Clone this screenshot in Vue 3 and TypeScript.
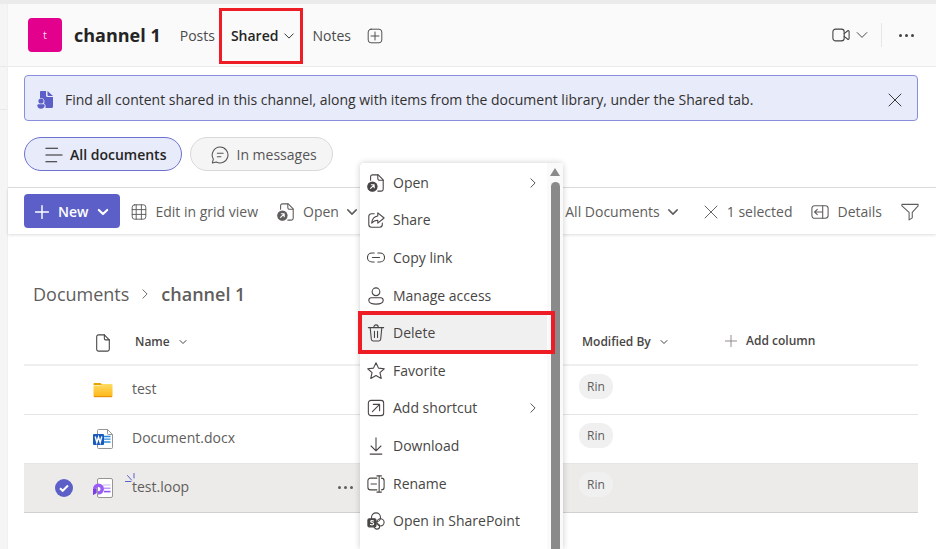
<script setup lang="ts">
import { h, ref } from 'vue'

const glyphs = {
  chevronDown: ['M4 7l6 6 6-6'],
  chevronRight: ['M7 4l6 6-6 6'],
  close: ['M2.500 2.500l15 15M17.500 2.500l-15 15'],
  plus: ['M10 2v16M2 10h16'],
  addBox: ['M5 1.500h10a3.500 3.500 0 0 1 3.500 3.500v10a3.500 3.500 0 0 1-3.500 3.500H5A3.500 3.500 0 0 1 1.500 15V5A3.500 3.500 0 0 1 5 1.500z', 'M10 5v10M5 10h10'],
  video: ['M4 3.500h6.500a3 3 0 0 1 3 3v7a3 3 0 0 1-3 3H4a3 3 0 0 1-3-3v-7a3 3 0 0 1 3-3z', 'M13.500 8.500l4-3.200c.6-.4 1.500-.1 1.500.7v8c0 .8-.9 1.100-1.500.7l-4-3.200'],
  lines: ['M1 2.500h13M1 10h18M1 17.500h12'],
  chat: ['M10 1.200a8.800 8.800 0 1 1-4.200 16.500L1.500 18.800l1.100-4.300A8.800 8.800 0 0 1 10 1.200z', 'M7 8h6.500M7 12h4'],
  grid: ['M4.500 1h11a3 3 0 0 1 3 3v12a3 3 0 0 1-3 3h-11a3 3 0 0 1-3-3V4a3 3 0 0 1 3-3z', 'M6.500 1v18M13 1v18M1.500 7h17M1.500 13h17'],
  share: ['M8 3H5a3 3 0 0 0-3 3v9a3 3 0 0 0 3 3h9a3 3 0 0 0 3-3v-1.500', 'M12 2l7 5.800-7 5.700v-3.300c-3 0-5 1-6.800 3.300C5.600 9 8 6 12 5.500z'],
  link: ['M8 4.500H5.500a5 5 0 0 0 0 10H8M12 4.500h2.500a5 5 0 0 1 0 10H12M6 9.500h8'],
  person: ['M10 1a4.300 4.300 0 1 1 0 8.600A4.300 4.300 0 0 1 10 1z', 'M5 12h10a3 3 0 0 1 3 3c0 2.600-3.600 4-8 4s-8-1.400-8-4a3 3 0 0 1 3-3z'],
  trash: ['M1.500 4h17M7.500 4c0-4 5-4 5 0M3.500 4l1.300 13a2 2 0 0 0 2 1.800h6.400a2 2 0 0 0 2-1.800l1.300-13', 'M8.300 8v7M11.700 8v7'],
  star: ['M10 .8l2.800 6 6.400.7-4.800 4.400 1.400 6.400L10 15.100l-5.800 3.200 1.400-6.400L.8 7.500l6.400-.7z'],
  shortcut: ['M4.500 1.500h11a3 3 0 0 1 3 3v11a3 3 0 0 1-3 3h-11a3 3 0 0 1-3-3v-11a3 3 0 0 1 3-3z', 'M7 6h7v7M14 6l-8 8'],
  download: ['M10 1v14M4.500 10l5.500 5.500 5.500-5.500M3.500 19h13'],
  rename: ['M11 3.500H4a3 3 0 0 0-3 3v7a3 3 0 0 0 3 3h7M16 3.500a3 3 0 0 1 3 3v7a3 3 0 0 1-3 3', 'M13.500 1v18M11 1h5M11 19h5', 'M4.500 10h6'],
  details: ['M4 3h12a3 3 0 0 1 3 3v8a3 3 0 0 1-3 3H4a3 3 0 0 1-3-3V6a3 3 0 0 1 3-3z', 'M13 3v14M4 10h9M7 7l-3 3 3 3'],
  filter: ['M1 1.500h18v1.700l-6.500 7.300v6L9 18.800v-8.300L1 3.200z'],
  file: ['M5 1h6.500L17 6.500V17a2 2 0 0 1-2 2H5a2 2 0 0 1-2-2V3a2 2 0 0 1 2-2z', 'M11.500 1v4a1.500 1.500 0 0 0 1.500 1.500h4'],
  sparks: ['M5 5l8 9M18 1v9M1 17h11'],
}
type GlyphName = keyof typeof glyphs

const Glyph = (props: { name: GlyphName }) =>
  h('svg', { viewBox: '0 0 20 20', class: 'glyph', 'aria-hidden': 'true' },
    glyphs[props.name].map((d) => h('path', { d })))
Glyph.props = ['name']

const OpenFile = () =>
  h('svg', { viewBox: '0 0 20 20', class: 'glyph', 'aria-hidden': 'true' }, [
    h('path', { d: 'M4 7V3a2 2 0 0 1 2-2h6.500L18 6.500V17a2 2 0 0 1-2 2h-4' }),
    h('path', { d: 'M12 1v4a2 2 0 0 0 2 2h4' }),
    h('circle', { cx: 6, cy: 14, r: 5.2, fill: 'currentColor' }),
    h('path', { d: 'M4 16l4-4M4.800 12H8v3.200', stroke: '#fff' }),
  ])

const SharePointMark = () =>
  h('svg', { viewBox: '0 0 20 20', class: 'glyph', 'aria-hidden': 'true' }, [
    h('circle', { cx: 10, cy: 6, r: 5 }),
    h('circle', { cx: 15, cy: 11.5, r: 4 }),
    h('circle', { cx: 11, cy: 16, r: 3 }),
    h('rect', { x: 1, y: 7.5, width: 9, height: 9, rx: 1.5, fill: 'currentColor' }),
    h('path', { d: 'M7.300 10c-1.500-.8-3.300-.5-3.200.6.100 1.500 3.300.8 3.300 2.500 0 1.300-2 1.500-3.600.7', stroke: '#fff' }),
  ])

interface MenuItem { label: string; icon: GlyphName | 'open' | 'sharepoint'; submenu?: boolean; active?: boolean }
const menu: MenuItem[] = [
  { label: 'Open', icon: 'open', submenu: true },
  { label: 'Share', icon: 'share' },
  { label: 'Copy link', icon: 'link' },
  { label: 'Manage access', icon: 'person' },
  { label: 'Delete', icon: 'trash', active: true },
  { label: 'Favorite', icon: 'star' },
  { label: 'Add shortcut', icon: 'shortcut', submenu: true },
  { label: 'Download', icon: 'download' },
  { label: 'Rename', icon: 'rename' },
  { label: 'Open in SharePoint', icon: 'sharepoint' },
]

interface FileRow { name: string; kind: 'folder' | 'word' | 'loop'; by: string }
const files: FileRow[] = [
  { name: 'test', kind: 'folder', by: 'Rin' },
  { name: 'Document.docx', kind: 'word', by: 'Rin' },
  { name: 'test.loop', kind: 'loop', by: 'Rin' },
]
const selected = ref<string[]>(['test.loop'])
</script>

<template>
  <div class="window">
    <div class="rail"></div>
    <div class="content">
      <header class="channel">
        <span class="avatar">t</span>
        <h1>channel 1</h1>
        <nav class="tabs">
          <a href="#posts">Posts</a>
          <a href="#shared" class="current" aria-current="page">Shared <Glyph name="chevronDown" class="small" /></a>
          <a href="#notes">Notes</a>
          <button type="button" aria-label="Add a tab"><Glyph name="addBox" /></button>
        </nav>
        <div class="actions">
          <button type="button" aria-label="Meet"><Glyph name="video" class="large" /><Glyph name="chevronDown" /></button>
          <span class="divider"></span>
          <button type="button" aria-label="More options" class="dots"><i></i><i></i><i></i></button>
        </div>
      </header>

      <section class="banner">
        <svg class="banner-icon" viewBox="0 0 16 18" aria-hidden="true">
          <path d="M4 0h5v4.500A1.500 1.500 0 0 0 10.500 6H16v9.500a1.500 1.500 0 0 1-1.500 1.500H8.500c.4-2.500 0-3.500-1.500-4.500C8.500 9 6.500 7 3 7V1a1 1 0 0 1 1-1z" />
          <path d="M10.500 0L16 5h-4.500a1 1 0 0 1-1-1z" />
          <circle cx="4" cy="10" r="2.600" />
          <path d="M1.500 13.300h5A1.200 1.200 0 0 1 7.700 14.500c0 2-1.500 3.200-3.700 3.200S.3 16.500.3 14.500a1.200 1.200 0 0 1 1.200-1.200z" />
        </svg>
        <p>Find all content shared in this channel, along with items from the document library, under the Shared tab.</p>
        <button type="button" aria-label="Dismiss"><Glyph name="close" /></button>
      </section>

      <div class="pills">
        <button type="button" class="pill on"><Glyph name="lines" class="large" />All documents</button>
        <button type="button" class="pill"><Glyph name="chat" class="large" />In messages</button>
      </div>

      <div class="toolbar">
        <button type="button" class="new"><Glyph name="plus" /><span>New</span><Glyph name="chevronDown" class="small" /></button>
        <button type="button" class="tool"><Glyph name="grid" />Edit in grid view</button>
        <button type="button" class="tool"><OpenFile class="large" />Open <Glyph name="chevronDown" class="small heavy" /></button>
        <div class="tools-end">
          <button type="button" class="tool view">All Documents <Glyph name="chevronDown" class="small heavy" /></button>
          <button type="button" class="tool"><Glyph name="close" />1 selected</button>
          <button type="button" class="tool"><Glyph name="details" class="large" />Details</button>
          <button type="button" class="tool" aria-label="Filter"><Glyph name="filter" class="large" /></button>
        </div>
      </div>

      <nav class="crumbs">
        <a href="#documents">Documents</a>
        <Glyph name="chevronRight" class="small" />
        <strong>channel 1</strong>
      </nav>

      <table class="files">
        <colgroup><col class="c-check" /><col class="c-kind" /><col class="c-name" /><col class="c-by" /><col /></colgroup>
        <thead>
          <tr>
            <th></th>
            <th class="kind"><Glyph name="file" class="large" /></th>
            <th class="name"><button type="button">Name <Glyph name="chevronDown" class="tiny" /></button></th>
            <th><button type="button">Modified By <Glyph name="chevronDown" class="tiny" /></button></th>
            <th><button type="button" class="add"><Glyph name="plus" class="small" />Add column</button></th>
          </tr>
        </thead>
        <tbody>
          <tr v-for="f in files" :key="f.name" :class="{ selected: selected.includes(f.name) }">
            <td class="check">
              <label>
                <input v-model="selected" type="checkbox" :value="f.name" :aria-label="f.name" />
                <svg viewBox="0 0 18 18" aria-hidden="true"><path d="M5 9.200l2.700 2.600 5.300-5.300" /></svg>
              </label>
            </td>
            <td class="kind">
              <svg v-if="f.kind === 'folder'" viewBox="0 0 20 20" aria-hidden="true">
                <defs><linearGradient id="folder" x2="0" y2="1"><stop stop-color="#ffdd62" /><stop offset="1" stop-color="#ffb514" /></linearGradient></defs>
                <path d="M.5 5V4a1 1 0 0 1 1-1h6l2 2z" fill="#e8a200" />
                <path d="M.5 5.500h7L9 4h9.500a1 1 0 0 1 1 1v11a1 1 0 0 1-1 1h-17a1 1 0 0 1-1-1z" fill="url(#folder)" />
                <path d="M1 16.700h18" stroke="#e58b08" />
              </svg>
              <svg v-else-if="f.kind === 'word'" viewBox="0 0 20 20" aria-hidden="true">
                <path d="M5.500.5h9l5 5v13a1 1 0 0 1-1 1h-13a1 1 0 0 1-1-1v-17a1 1 0 0 1 1-1z" fill="#fff" stroke="#979593" />
                <path d="M14.500.5v4a1 1 0 0 0 1 1h4" fill="none" stroke="#979593" />
                <path d="M11 7.500h6.500M11 10.200h6.500M11 13h6.500" stroke="#2b8be0" stroke-width="1.300" />
                <rect y="5" width="11" height="11" rx="1" fill="#185abd" />
                <path d="M2.200 7.500l1.600 6 1.700-5.500 1.700 5.500 1.600-6" fill="none" stroke="#fff" stroke-width="1.400" />
              </svg>
              <svg v-else viewBox="0 0 20 20" aria-hidden="true">
                <rect x="4.500" y=".5" width="15" height="19" rx="1.500" fill="#fff" stroke="#979593" />
                <path d="M10 7h7.500" stroke="#ddd0fb" stroke-width="1.600" />
                <path d="M11 10.300h6.500" stroke="#b99af8" stroke-width="1.600" />
                <path d="M11 13.600h6.500" stroke="#8b52f4" stroke-width="1.600" />
                <path d="M0 17v-6a5.500 5.500 0 1 1 5.500 5.500H5v-3.500a2 2 0 1 0-1.500-2V15z" fill="#9a5cf5" />
                <path d="M0 17v-6h3.500V15z" fill="#7a3de8" />
              </svg>
            </td>
            <td>
              <div class="file-name">
                <a :href="'#' + f.name">{{ f.name }}</a>
                <Glyph v-if="f.kind === 'loop'" name="sparks" class="sparks" />
                <button v-if="selected.includes(f.name)" type="button" class="dots" aria-label="Show actions"><i></i><i></i><i></i></button>
              </div>
            </td>
            <td class="by"><span>{{ f.by }}</span></td>
            <td></td>
          </tr>
        </tbody>
      </table>
    </div>

    <div class="menu">
      <ul>
        <li v-for="m in menu" :key="m.label">
          <button type="button" :class="{ active: m.active }">
            <OpenFile v-if="m.icon === 'open'" class="large" />
            <SharePointMark v-else-if="m.icon === 'sharepoint'" class="large" />
            <Glyph v-else :name="m.icon" class="large" />
            <span>{{ m.label }}</span>
            <Glyph v-if="m.submenu" name="chevronRight" class="small" />
          </button>
        </li>
      </ul>
      <div class="scroll" aria-hidden="true"><span class="up"></span><span class="thumb"></span></div>
    </div>
  </div>
</template>

<style>
body {
  overflow: hidden;
  background: #fff;
}
</style>

<style scoped>
.window {
  position: relative;
  display: flex;
  min-height: 100vh;
  box-sizing: border-box;
  border-top: 4px solid #ebebeb;
  font: 14px/20px "Open Sans", "Noto Sans", sans-serif;
  color: #605e5c;
}
button {
  display: inline-flex;
  align-items: center;
  padding: 0;
  border: 0;
  background: none;
  font: inherit;
  color: inherit;
  white-space: nowrap;
}
a { color: inherit; text-decoration: none; }
.glyph {
  width: 16px;
  height: 16px;
  flex: none;
  fill: none;
  stroke: currentColor;
  stroke-width: 1.2;
  stroke-linecap: round;
  stroke-linejoin: round;
}
.glyph.large { width: 18px; height: 18px; }
.glyph.small { width: 14px; height: 14px; stroke-width: 1.3; }
.glyph.tiny { width: 10px; height: 10px; stroke-width: 2; }
.glyph.heavy { margin-left: -2px; stroke-width: 2.2; }

.rail {
  flex: none;
  width: 8px;
  box-sizing: border-box;
  background: linear-gradient(#e8e8e8, #e8e8e8) 0 62px / 8px 1px no-repeat, linear-gradient(#e8e8e8, #e8e8e8) 0 105px / 8px 1px no-repeat, #f5f5f5;
  border-right: 1px solid #f0f0f0;
}
.content { flex: 1; min-width: 0; }

.channel {
  display: flex;
  align-items: center;
  height: 62px;
  padding: 0 20px;
  background: #fafafa;
  border-bottom: 1px solid #ebebeb;
}
.avatar {
  width: 34px;
  height: 34px;
  border-radius: 4px;
  background: #e3008c;
  color: #fbd3ea;
  font-size: 11px;
  line-height: 34px;
  text-align: center;
}
h1 {
  margin: 0 19px 0 12px;
  font-size: 18px;
  line-height: 24px;
  font-weight: 700;
  color: #242424;
}
.tabs { display: flex; align-items: center; gap: 16px; padding-top: 2px; color: #4b4b4b; }
.tabs .current {
  position: relative;
  display: flex;
  align-items: center;
  gap: 4px;
  color: #242424;
  font-weight: 600;
}
.tabs .current::after {
  content: "";
  position: absolute;
  inset: -18px -7px -18px -12px;
  border: 3px solid #ee1c24;
}
.actions { display: flex; align-items: center; margin-left: auto; gap: 11px; color: #424242; }
.actions button { gap: 4px; }
.divider { width: 1px; height: 24px; background: #e6e6e6; }
.dots { gap: 3px; }
.dots i { width: 3px; height: 3px; border-radius: 50%; background: currentColor; }
.actions .dots { gap: 3px; margin: 0 2px 0 6px; }

.banner {
  display: flex;
  align-items: center;
  gap: 12px;
  margin: 8px 18px 0 16px;
  padding: 14px 14px 10px 12px;
  border: 1px solid #8b8fdb;
  border-radius: 4px;
  background: #e8ebfa;
  color: #323130;
}
.banner p { flex: 1; margin: 0; }
.banner-icon { width: 16px; height: 18px; fill: #5b5fc7; }

.pills { display: flex; gap: 8px; padding: 16px; border-bottom: 1px solid #e1e1e1; }
.pill {
  gap: 7px;
  height: 34px;
  padding: 1px 15px 0 20px;
  border: 1px solid #d9d9d9;
  border-radius: 17px;
  background: #f5f5f5;
  color: #555;
}
.pill.on { border-color: #6e72cf; background: #e8ebfa; color: #242424; font-weight: 600; }

.toolbar {
  display: flex;
  align-items: center;
  gap: 19px;
  padding: 6px 17px 6px 16px;
  box-shadow: 0 1px 3px rgba(0, 0, 0, 0.14);
}
.new {
  gap: 8px;
  height: 34px;
  margin-right: -8px;
  padding: 1px 10px 0;
  border-radius: 4px;
  background: #5b5fc7;
  color: #fff;
  font-weight: 600;
}
.new .glyph { stroke-width: 1.8; }
.new .small { stroke-width: 3; }
.tool { gap: 8px; padding-top: 1px; }
.tools-end { display: flex; gap: 19px; margin-left: auto; }
.tools-end .view { margin-right: 4px; }

.crumbs {
  display: flex;
  align-items: center;
  gap: 9px;
  padding: 44px 25px 10px;
  font-size: 18px;
  line-height: 32px;
}
.crumbs strong { font-weight: 600; }

.files {
  width: calc(100% - 34px);
  margin-left: 16px;
  table-layout: fixed;
  border-collapse: separate;
  border-spacing: 0;
}
.c-check { width: 58px; }
.c-kind { width: 42px; }
.c-name { width: 50%; }
.c-by { width: 16%; }
th {
  height: 44px;
  padding: 0 0 0 11px;
  border-bottom: 2px solid #efefef;
  font-size: 12px;
  text-align: left;
  color: #484644;
}
th button { gap: 8px; font-weight: 600; }
th:last-child { padding-left: 10px; }
th .add .glyph { stroke: #85827f; }
th.kind, td.kind { padding-left: 0; text-align: center; }
th .glyph, td svg { vertical-align: middle; }
td { height: 46px; padding: 0 0 2px 8px; border-bottom: 1px solid #e5e5e5; }
td.kind svg { width: 20px; height: 20px; }
.selected td { background: #edebe9; border-bottom-color: #d0d0d0; }
.check { padding-left: 22px; text-align: center; }
.check label { position: relative; display: inline-block; width: 18px; height: 18px; vertical-align: middle; }
.check input { appearance: none; width: 18px; height: 18px; margin: 0; border-radius: 50%; vertical-align: top; }
.check input:checked { background: #5b5fc7; }
.check svg { position: absolute; inset: 0; fill: none; stroke: #fff; stroke-width: 2; visibility: hidden; }
.check input:checked + svg { visibility: visible; }
.file-name { position: relative; display: flex; align-items: center; justify-content: space-between; padding-right: 218px; }
.sparks { position: absolute; left: -7px; top: -4px; width: 10px; height: 10px; stroke: #5b5fc7; stroke-width: 2; }
.by { vertical-align: top; padding-top: 8px; height: 38px; }
.by span {
  display: inline-block;
  padding: 0 8px;
  border-radius: 12px;
  background: #f0f0f0;
  font-size: 12px;
  line-height: 25px;
}

.menu {
  position: absolute;
  top: 159px;
  left: 360px;
  bottom: 0;
  display: flex;
  width: 203px;
  border-radius: 4px 4px 0 0;
  background: #fff;
  box-shadow: 0 0 6px rgba(0, 0, 0, 0.2);
  color: #484644;
}
.menu ul {
  display: grid;
  grid-auto-rows: 1fr;
  flex: 1;
  height: 376px;
  margin: 1px 0 0;
  padding: 0;
  list-style: none;
}
.menu li { display: flex; }
.menu button { position: relative; flex: 1; gap: 8px; padding: 0 7px; }
.menu button span { flex: 1; text-align: left; }
.menu .active { z-index: 1; background: #f0f0f0; }
.menu .active::after {
  content: "";
  position: absolute;
  inset: -3px -8px -2px -2px;
  border: 4px solid #ee1c24;
}
.scroll {
  display: flex;
  flex-direction: column;
  align-items: center;
  gap: 6px;
  width: 16px;
  padding-top: 5px;
  background: #fafafa;
}
.up { border: 5px solid transparent; border-top: 0; border-bottom: 8px solid #8a8a8a; }
.thumb { flex: 1; width: 9px; border-radius: 5px 5px 0 0; background: #8a8a8a; }
</style>
